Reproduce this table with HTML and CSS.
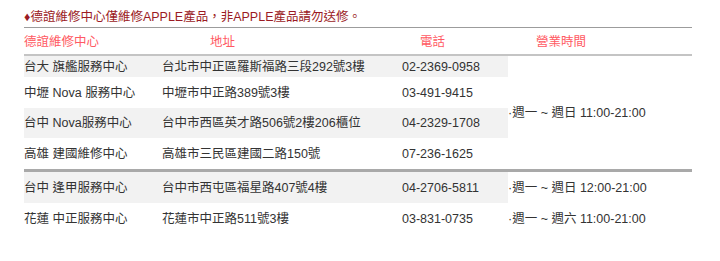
FILE: index.html
```html
<!DOCTYPE html>
<html lang="zh-Hant">
<head>
<meta charset="utf-8">
<title>德誼維修中心</title>
<link rel="stylesheet" href="styles.css">
</head>
<body>
<div class="page">
  <p class="notice">♦德誼維修中心僅維修APPLE產品，非APPLE產品請勿送修。</p>
  <div class="head">
    <div class="h h1">德誼維修中心</div>
    <div class="h h2">地址</div>
    <div class="h h3">電話</div>
    <div class="h h4">營業時間</div>
  </div>
  <div class="group g1">
    <div class="c shade">台大 旗艦服務中心</div>
    <div class="c shade">台北市中正區羅斯福路三段292號3樓</div>
    <div class="c shade">02-2369-0958</div>
    <div class="c time span4">·週一 ~ 週日 11:00-21:00</div>
    <div class="c">中壢 Nova 服務中心</div>
    <div class="c">中壢市中正路389號3樓</div>
    <div class="c">03-491-9415</div>
    <div class="c shade">台中 Nova服務中心</div>
    <div class="c shade">台中市西區英才路506號2樓206櫃位</div>
    <div class="c shade">04-2329-1708</div>
    <div class="c">高雄 建國維修中心</div>
    <div class="c">高雄市三民區建國二路150號</div>
    <div class="c">07-236-1625</div>
  </div>
  <div class="group g2">
    <div class="c shade">台中 逢甲服務中心</div>
    <div class="c shade">台中市西屯區福星路407號4樓</div>
    <div class="c shade">04-2706-5811</div>
    <div class="c time">·週一 ~ 週日 12:00-21:00</div>
    <div class="c">花蓮 中正服務中心</div>
    <div class="c">花蓮市中正路511號3樓</div>
    <div class="c">03-831-0735</div>
    <div class="c time">·週一 ~ 週六 11:00-21:00</div>
  </div>
</div>
</body>
</html>
```
FILE: styles.css
```css
html, body {
  margin: 0;
  padding: 0;
  background: #ffffff;
}
body {
  font-family: "Liberation Sans", "Noto Sans CJK TC", sans-serif;
  font-size: 12.5px;
  color: #333333;
}
.page {
  width: 668px;
  padding-left: 24px;
}
.notice {
  margin: 0;
  padding: 8px 0 1px 0;
  line-height: 18px;
  color: #9b1b24;
  border-bottom: 1px solid #9c9c9c;
}
.head {
  display: grid;
  grid-template-columns: 138px 240px 106px 184px;
  padding: 5px 0 3px 0;
  line-height: 18px;
  border-bottom: 2px solid #c4c4c4;
  color: #ff5a63;
}
.h2 { padding-left: 48px; }
.h3 { padding-left: 18px; }
.h4 { padding-left: 28px; }
.group {
  display: grid;
  grid-template-columns: 138px 240px 106px 184px;
}
.g1 {
  grid-template-rows: 21px 31px 30px 31px;
}
.g2 {
  grid-template-rows: 31px 32px;
  border-top: 3px solid #a9a9a9;
}
.c {
  display: flex;
  align-items: center;
  line-height: 18px;
  white-space: nowrap;
}
.shade {
  background: #f2f2f2;
}
.span4 {
  grid-column: 4;
  grid-row: 1 / 5;
}
```
